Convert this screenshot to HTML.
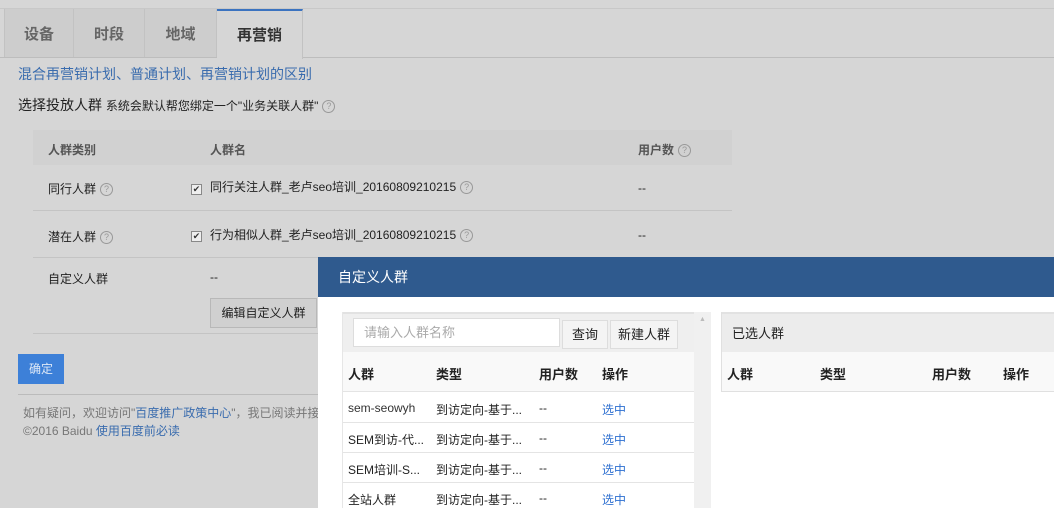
<!DOCTYPE html>
<html><head><meta charset="utf-8"><style>
*{margin:0;padding:0;box-sizing:border-box}
body{width:1054px;height:508px;overflow:hidden;background:#d6d6d6;font-family:"Liberation Sans","Noto Sans CJK SC",sans-serif;font-size:12px;color:#222;position:relative}
.a{position:absolute;white-space:nowrap}
.tab{position:absolute;top:9px;height:48px;background:#cdcdcd;border-right:1px solid #c2c2c2;font-size:15px;font-weight:bold;color:#666;line-height:52px;text-align:center}
.q{display:inline-block;width:13px;height:13px;border:1px solid #999;border-radius:50%;font-size:9px;line-height:11px;text-align:center;color:#999;vertical-align:middle;margin-left:4px;font-weight:normal}
.cb{position:absolute;width:11px;height:11px;border:1px solid #888;background:#eee;font-size:9px;line-height:9px;text-align:center;color:#333}
.hl{position:absolute;height:1px;background:#c4c4c4}
.b{color:#3a6cae}
</style></head><body>
<div class="hl" style="left:0;top:8px;width:1054px;background:#c8c8c8"></div>
<div class="hl" style="left:0;top:57px;width:1054px;background:#bdbdbd"></div>
<div class="tab" style="left:4px;width:70px;border-left:1px solid #c2c2c2">设备</div>
<div class="tab" style="left:74px;width:71px">时段</div>
<div class="tab" style="left:145px;width:72px">地域</div>
<div class="tab" style="left:217px;width:86px;height:50px;background:#d6d6d6;border-top:2px solid #3b73c0;color:#333;line-height:50px">再营销</div>
<div class="a b" style="left:18px;top:64px;font-size:14px">混合再营销计划、普通计划、再营销计划的区别</div>
<div class="a" style="left:18px;top:95px;font-size:14px">选择投放人群 <span style="font-size:12px">系统会默认帮您绑定一个"业务关联人群"</span><span class="q">?</span></div>
<div class="a" style="left:33px;top:130px;width:699px;height:35px;background:#d1d1d1"></div>
<div class="a" style="left:48px;top:141px;font-weight:bold;color:#555">人群类别</div>
<div class="a" style="left:210px;top:141px;font-weight:bold;color:#555">人群名</div>
<div class="a" style="left:638px;top:141px;font-weight:bold;color:#555">用户数<span class="q">?</span></div>
<div class="a" style="left:48px;top:180px">同行人群<span class="q">?</span></div>
<div class="cb" style="left:191px;top:184px">✔</div>
<div class="a" style="left:210px;top:178px">同行关注人群_老卢seo培训_20160809210215<span class="q">?</span></div>
<div class="a" style="left:638px;top:181px">--</div>
<div class="hl" style="left:33px;top:210px;width:699px"></div>
<div class="a" style="left:48px;top:228px">潜在人群<span class="q">?</span></div>
<div class="cb" style="left:191px;top:231px">✔</div>
<div class="a" style="left:210px;top:226px">行为相似人群_老卢seo培训_20160809210215<span class="q">?</span></div>
<div class="a" style="left:638px;top:228px">--</div>
<div class="hl" style="left:33px;top:257px;width:699px"></div>
<div class="a" style="left:48px;top:270px">自定义人群</div>
<div class="a" style="left:210px;top:270px">--</div>
<div class="a" style="left:210px;top:298px;width:107px;height:30px;border:1px solid #b8b8b8;background:#d0d0d0;line-height:28px;text-align:center">编辑自定义人群</div>
<div class="hl" style="left:33px;top:333px;width:699px"></div>
<div class="a" style="left:18px;top:354px;width:46px;height:30px;background:#3d80d8;color:#dfe9f7;line-height:30px;text-align:center">确定</div>
<div class="hl" style="left:18px;top:394px;width:700px;background:#bbb"></div>
<div class="a" style="left:23px;top:404px;color:#777">如有疑问，欢迎访问"<span class="b">百度推广政策中心</span>"，我已阅读并接</div>
<div class="a" style="left:23px;top:422px;color:#777">©2016 Baidu <span class="b">使用百度前必读</span></div>

<div class="a" style="left:318px;top:257px;width:736px;height:251px;background:#fff">
 <div class="a" style="left:0;top:0;width:736px;height:40px;background:#2f5a8e;color:#fff;font-size:14px;line-height:40px;padding-left:20px">自定义人群</div>
 <div class="a" style="left:24px;top:55px;width:352px;height:196px;background:#fff;border-left:1px solid #e6e6e6">
  <div class="a" style="left:0;top:0;width:352px;height:40px;background:#efefef;border-top:2px solid #e2e2e2"></div>
  <div class="a" style="left:10px;top:6px;width:207px;height:29px;background:#fff;border:1px solid #ddd;color:#aaa;font-size:13px;line-height:27px;padding-left:10px">请输入人群名称</div>
  <div class="a" style="left:219px;top:8px;width:46px;height:29px;background:#f4f4f4;border:1px solid #ddd;font-size:13px;line-height:27px;text-align:center">查询</div>
  <div class="a" style="left:267px;top:8px;width:68px;height:29px;background:#f4f4f4;border:1px solid #ddd;font-size:13px;line-height:27px;text-align:center">新建人群</div>
  <div class="a" style="left:0;top:40px;width:352px;height:40px;background:#f9f9f9;border-bottom:1px solid #e4e4e4"></div>
  <div class="a" style="left:5px;top:52px;font-weight:bold;font-size:13px">人群</div>
  <div class="a" style="left:93px;top:52px;font-weight:bold;font-size:13px">类型</div>
  <div class="a" style="left:196px;top:52px;font-weight:bold;font-size:13px">用户数</div>
  <div class="a" style="left:259px;top:52px;font-weight:bold;font-size:13px">操作</div>
  <div class="a" style="left:5px;top:89px;color:#333">sem-seowyh</div><div class="a" style="left:93px;top:89px">到访定向-基于...</div><div class="a" style="left:196px;top:89px">--</div><div class="a" style="left:259px;top:89px;color:#2d6fd0">选中</div>
  <div class="hl" style="left:0;top:110px;width:352px;background:#e4e4e4"></div>
  <div class="a" style="left:5px;top:119px">SEM到访-代...</div><div class="a" style="left:93px;top:119px">到访定向-基于...</div><div class="a" style="left:196px;top:119px">--</div><div class="a" style="left:259px;top:119px;color:#2d6fd0">选中</div>
  <div class="hl" style="left:0;top:140px;width:352px;background:#e4e4e4"></div>
  <div class="a" style="left:5px;top:149px">SEM培训-S...</div><div class="a" style="left:93px;top:149px">到访定向-基于...</div><div class="a" style="left:196px;top:149px">--</div><div class="a" style="left:259px;top:149px;color:#2d6fd0">选中</div>
  <div class="hl" style="left:0;top:170px;width:352px;background:#e4e4e4"></div>
  <div class="a" style="left:5px;top:179px">全站人群</div><div class="a" style="left:93px;top:179px">到访定向-基于...</div><div class="a" style="left:196px;top:179px">--</div><div class="a" style="left:259px;top:179px;color:#2d6fd0">选中</div>
 </div>
 <div class="a" style="left:376px;top:55px;width:17px;height:196px;background:#f0f0f0;color:#bbb;font-size:7px;text-align:center;padding-top:4px">▲</div>
 <div class="a" style="left:403px;top:55px;width:333px;height:80px;border:1px solid #e0e0e0;border-top:2px solid #e2e2e2;border-right:none">
  <div class="a" style="left:0;top:0;width:333px;height:38px;background:#ececec;font-size:13px;line-height:40px;padding-left:10px">已选人群</div>
  <div class="a" style="left:0;top:38px;width:333px;height:39px;background:#f9f9f9"></div>
  <div class="a" style="left:5px;top:50px;font-weight:bold;font-size:13px">人群</div>
  <div class="a" style="left:98px;top:50px;font-weight:bold;font-size:13px">类型</div>
  <div class="a" style="left:210px;top:50px;font-weight:bold;font-size:13px">用户数</div>
  <div class="a" style="left:281px;top:50px;font-weight:bold;font-size:13px">操作</div>
 </div>
</div>
</body></html>
